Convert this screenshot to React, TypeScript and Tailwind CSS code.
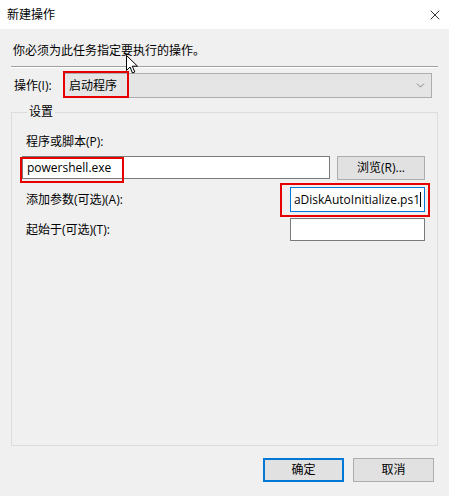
import { X, ChevronDown } from "lucide-react";

const font = "font-['Segoe_UI','Open_Sans','Noto_Sans_CJK_SC',sans-serif]";

// red annotation box drawn over the dialog
const Mark = ({ className }: { className: string }) => (
  <div className={`absolute border-2 border-[#e60000] pointer-events-none ${className}`} />
);

export default function App() {
  return (
    <div className={`relative w-[449px] h-[496px] bg-[#f0f0f0] text-[12px] text-black overflow-hidden ${font}`}>
      {/* title bar */}
      <div className="h-[29px] bg-white flex items-center justify-between pl-[7px] pr-[6px]">
        <span className="text-[12px]">新建操作</span>
        <X className="w-[16px] h-[16px]" strokeWidth={1.2} />
      </div>

      <div className="px-[11px]">
        <p className="pl-[2px] mt-[14px] leading-[16px]">你必须为此任务指定要执行的操作。</p>
        <div className="mt-[7px] h-[2px] border-t border-[#a0a0a0] border-b border-b-white" />

        {/* action combo */}
        <div className="mt-[5px] flex items-center">
          <span className="pl-[3px] w-[52px]">操作(I):</span>
          <div className="h-[25px] w-[369px] border border-[#adadad] bg-[#e5e5e5] flex items-center justify-between pl-[5px] pr-[4px]">
            <span>启动程序</span>
            <ChevronDown className="w-[13px] h-[13px] text-[#555]" strokeWidth={1.2} />
          </div>
        </div>

        {/* settings group */}
        <fieldset className="mt-[6px] w-[427px] h-[342px] border border-[#dcdcdc] pl-[10px] pr-[12px] pt-[14px]">
          <legend className="ml-[5px] px-[2px] leading-[16px]">设置</legend>
          <div className="pl-[4px] leading-[16px]">程序或脚本(P):</div>
          <div className="mt-[6px] flex items-start justify-between">
            <div className="h-[23px] w-[308px] border border-[#7a7a7a] bg-white flex items-center pl-[4px]">
              powershell.exe
            </div>
            <button className="h-[24px] w-[88px] border border-[#adadad] bg-[#e1e1e1]">浏览(R)...</button>
          </div>
          <div className="mt-[7px] flex items-center justify-between">
            <span className="pl-[4px]">添加参数(可选)(A):</span>
            <div className="h-[25px] w-[135px] border border-[#0078d7] bg-white flex items-center justify-end pr-[3px] overflow-hidden whitespace-nowrap">
              <span>aDiskAutoInitialize.ps1</span>
              <span className="w-px h-[15px] bg-black" />
            </div>
          </div>
          <div className="mt-[6px] flex items-center justify-between">
            <span className="pl-[4px]">起始于(可选)(T):</span>
            <div className="h-[23px] w-[135px] border border-[#7a7a7a] bg-white" />
          </div>
        </fieldset>

        {/* footer buttons */}
        <div className="mt-[12px] flex justify-end gap-[9px] pr-[4px]">
          <button className="h-[24px] w-[81px] border-2 border-[#0078d7] bg-[#e1e1e1]">确定</button>
          <button className="h-[24px] w-[81px] border border-[#adadad] bg-[#e1e1e1]">取消</button>
        </div>
      </div>

      <Mark className="left-[63px] top-[71px] w-[66px] h-[27px]" />
      <Mark className="left-[20px] top-[157px] w-[104px] h-[26px]" />
      <Mark className="left-[280px] top-[183px] w-[150px] h-[34px]" />

      {/* mouse pointer */}
      <svg className="absolute left-[126px] top-[55px]" width="13" height="19" viewBox="0 0 13 19">
        <path d="M0.5 0.5 L0.5 15.5 L4 12 L6.5 18 L8.8 17 L6.3 11.2 L11.5 11.2 Z" fill="white" stroke="black" strokeWidth="1" strokeLinejoin="miter" />
      </svg>
    </div>
  );
}
